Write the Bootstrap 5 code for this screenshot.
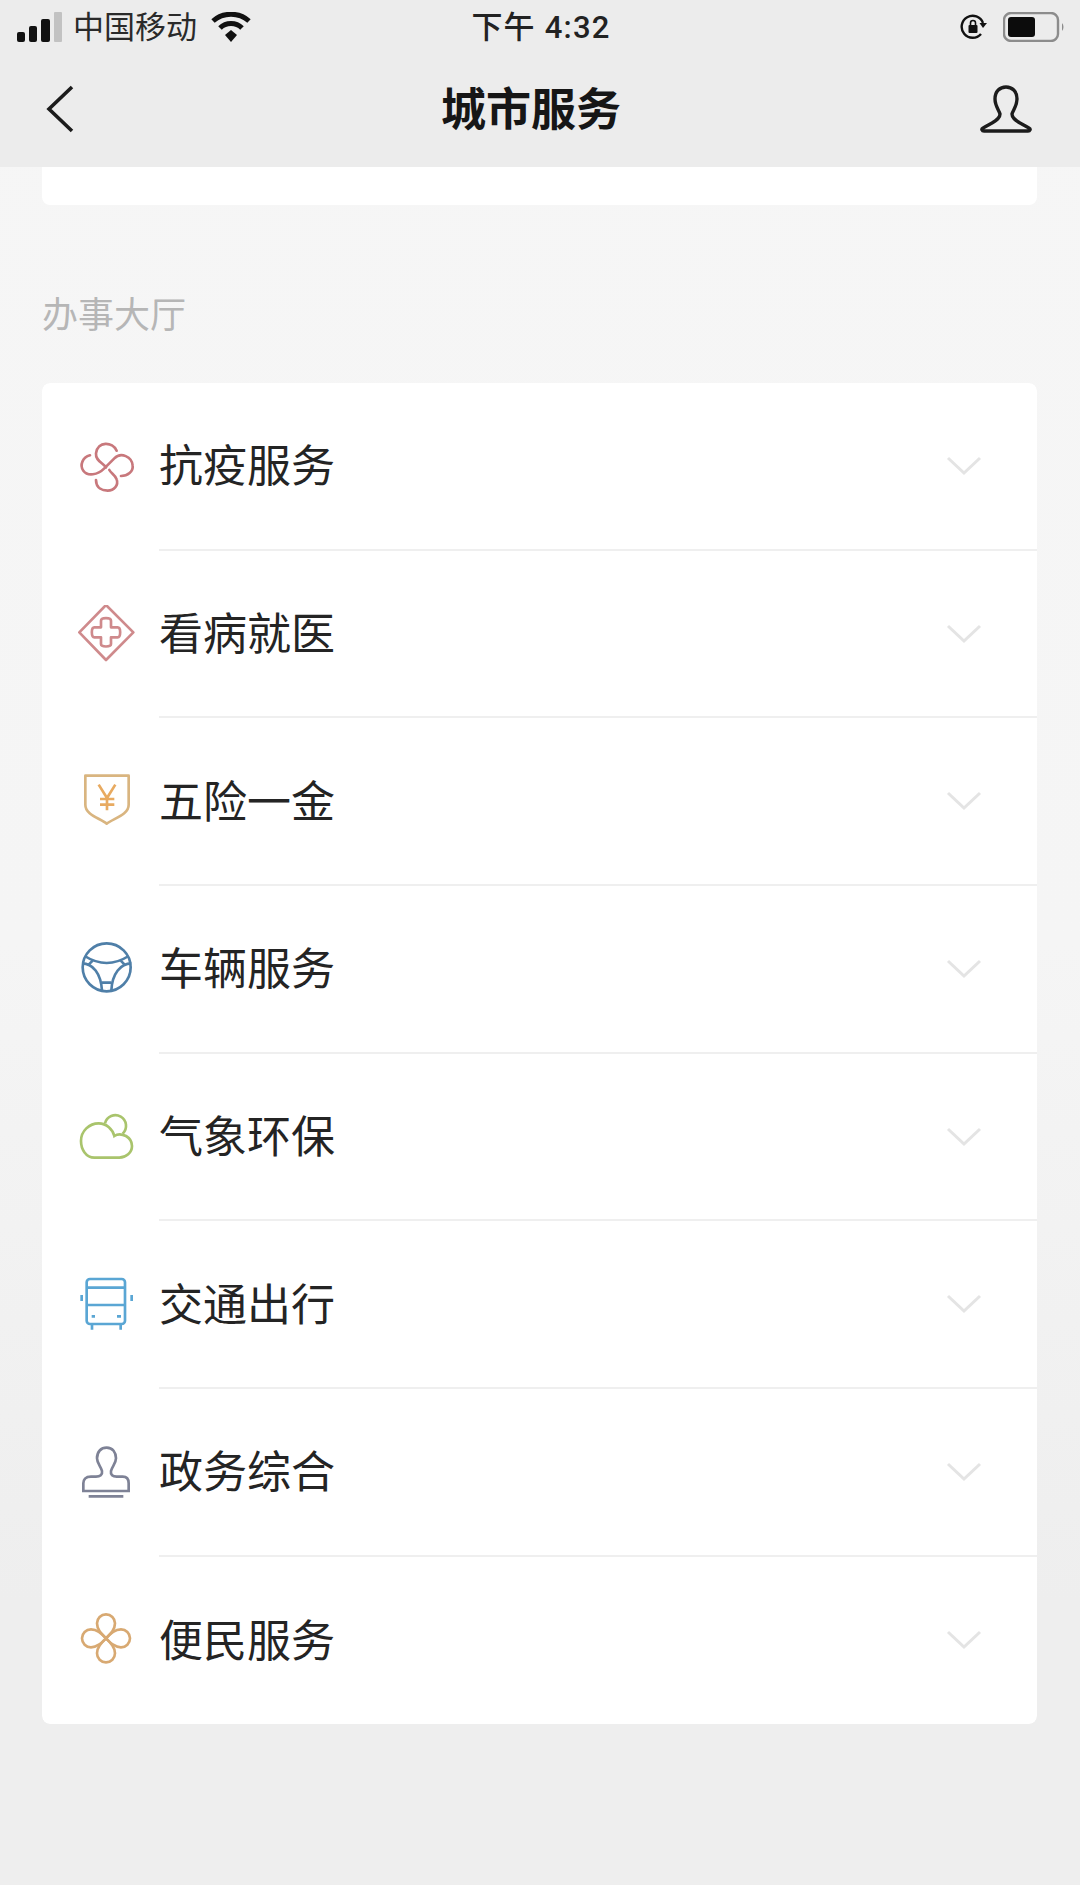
<!DOCTYPE html>
<html lang="zh-CN">
<head>
    <meta charset="UTF-8">
    <meta name="viewport" content="width=device-width, initial-scale=1.0">
    <title>城市服务</title>
    <link href="https://cdn.jsdelivr.net/npm/bootstrap@5.3.3/dist/css/bootstrap.min.css" rel="stylesheet">
    <style>
        body {
            width: 1080px;
            height: 1885px;
            overflow: hidden;
            background: linear-gradient(#f6f6f6, #f5f5f5 50%, #eeeeee 85%, #eeeeee);
            font-family: "Liberation Sans", "Noto Sans CJK SC", sans-serif;
            color: #1e1e1e;
        }
        .top-head { height: 167px; background: #ececec; }
        .status-line { height: 54px; padding: 0 15px 0 17px; }
        .status-side { width: 340px; }
        .carrier { font-size: 31px; line-height: 1; margin-left: 10px; margin-right: 14px; color: #2a2a2a; }
        .clock { font-family: Roboto, "Noto Sans CJK SC", sans-serif; font-weight: 500; font-size: 31px; line-height: 1; letter-spacing: 1.2px; color: #222; }
        .head-line { height: 113px; padding: 0 48px 3px 46px; }
        .head-title { font-size: 45px; font-weight: 700; line-height: 1; color: #161616; margin-left: 6px; padding-top: 3px; }
        .stub-card { height: 38px; margin: 0 43px 0 42px; background: #fff; border-radius: 0 0 8px 8px; }
        .hall-title { font-size: 36px; line-height: 1; color: #b6b6b6; margin: 93px 43px 49px 42px; }
        .hall-list { margin: 0 43px 0 42px; border-radius: 8px; overflow: hidden; border: 0; }
        .hall-row { height: 167.7px; padding: 0 0 0 34px; border: 0; background: #fff; }
        .hall-row:last-child { height: 167px; }
        .hall-body { height: 100%; margin-left: 23px; padding-right: 55px; border-bottom: 2px solid #efefef; }
        .hall-row:last-child .hall-body { border-bottom: 0; }
        .hall-name { font-size: 44px; line-height: 1; padding-top: 3px; color: #242424; }
        .hall-icon { flex-shrink: 0; fill: none; stroke-width: 8; }
    </style>
</head>
<body>
    <header class="top-head">
        <div class="status-line d-flex align-items-center justify-content-between">
            <div class="status-side d-flex align-items-center">
                <svg width="46" height="30" viewBox="0 0 46 30"><rect x="0" y="20" width="8" height="10" rx="2" fill="#111"/><rect x="12" y="14" width="8" height="16" rx="2" fill="#111"/><rect x="24" y="7" width="9" height="23" rx="2" fill="#111"/><rect x="37" y="0" width="8" height="30" rx="1" fill="#c2c2c2"/></svg>
                <span class="carrier">中国移动</span>
                <svg width="40" height="30" viewBox="0 0 40 30"><path d="M2 9C12 0 28 0 38 9" fill="none" stroke="#111" stroke-width="5"/><path d="M9 16C15 10 25 10 31 16" fill="none" stroke="#111" stroke-width="5"/><path d="M14 23L20 18L26 23L20 30Z" fill="#111"/></svg>
            </div>
            <div class="clock">下午 4:32</div>
            <div class="status-side d-flex align-items-center justify-content-end">
                <svg class="me-3" width="27" height="27" viewBox="0 0 27 27"><path d="M21 20A11 11 0 1 1 23 9" fill="none" stroke="#111" stroke-width="2.4"/><path d="M19.5 9H27L23 14Z" fill="#111"/><rect x="8.5" y="11" width="9" height="8" rx="1" fill="#111"/><path d="M10.5 11V9A2.5 2.5 0 0 1 15.5 9V11" fill="none" stroke="#111" stroke-width="1.6"/></svg>
                <svg width="62" height="30" viewBox="0 0 62 30"><rect x="1" y="1" width="54" height="28" rx="7" fill="none" stroke="#8c8c8c" stroke-width="2.4"/><rect x="5" y="5" width="27" height="20" rx="3" fill="#0c0c0c"/><path d="M59 11C61 13 61 17 59 19Z" fill="#8c8c8c"/></svg>
            </div>
        </div>
        <div class="head-line d-flex align-items-center justify-content-between">
            <svg width="30" height="50" viewBox="0 0 30 50"><path d="M26 3L3 25L26 47" fill="none" stroke="#1c1c1c" stroke-width="3.6"/></svg>
            <div class="head-title">城市服务</div>
            <svg width="52" height="48" viewBox="0 0 52 48"><path d="M15 14C15 6 20 2 26 2C32 2 37 6 37 14C37 21 33 25 32 29C32 33 35 35 40 38L49 43C51 44 50 46 48 46H4C2 46 1 44 3 43L12 38C17 35 20 33 20 29C19 25 15 21 15 14Z" fill="none" stroke="#1c1c1c" stroke-width="3.4" stroke-linejoin="round"/></svg>
        </div>
    </header>

    <div class="stub-card"></div>
    <div class="hall-title">办事大厅</div>

    <div class="list-group hall-list">
        <div class="list-group-item hall-row d-flex align-items-center">
            <svg width="60" height="60" viewBox="50 51 180 180" class="hall-icon" stroke="#c8787c" stroke-linecap="round"><path d="M172 92C160 65 115 62 110 100C108 122 130 128 140 142"/><path d="M92 106C70 112 60 135 72 152C85 170 115 165 135 145L165 115C185 95 218 110 220 137C222 155 205 168 185 168"/><path d="M110 180C110 205 130 212 145 212C165 212 178 195 172 178C168 165 155 160 150 150"/></svg>
            <div class="hall-body flex-fill d-flex align-items-center justify-content-between">
                <span class="hall-name">抗疫服务</span>
                <svg width="36" height="20" viewBox="0 0 36 20"><path d="M2 2L18 17L34 2" fill="none" stroke="#e4e4e4" stroke-width="3"/></svg>
            </div>
        </div>
        <div class="list-group-item hall-row d-flex align-items-center">
            <svg width="60" height="60" viewBox="50 45 180 180" class="hall-icon" stroke="#cf8a8c" stroke-linejoin="round"><path d="M140 45L222 127L140 210L60 127Z"/><path d="M125 92C125 82 155 82 155 92V112H175C185 112 185 142 175 142H155V162C155 172 125 172 125 162V142H105C95 142 95 112 105 112H125Z"/></svg>
            <div class="hall-body flex-fill d-flex align-items-center justify-content-between">
                <span class="hall-name">看病就医</span>
                <svg width="36" height="20" viewBox="0 0 36 20"><path d="M2 2L18 17L34 2" fill="none" stroke="#e4e4e4" stroke-width="3"/></svg>
            </div>
        </div>
        <div class="list-group-item hall-row d-flex align-items-center">
            <svg width="60" height="60" viewBox="50 67 180 180" class="hall-icon" stroke-linejoin="round"><path d="M78 78H208V165C208 195 165 205 142 222C120 205 78 195 78 165Z" stroke="#d9b580"/><path d="M118 105L143 145L168 105M143 145V182M122 148H165M122 165H165" stroke="#e8aa60"/></svg>
            <div class="hall-body flex-fill d-flex align-items-center justify-content-between">
                <span class="hall-name">五险一金</span>
                <svg width="36" height="20" viewBox="0 0 36 20"><path d="M2 2L18 17L34 2" fill="none" stroke="#e4e4e4" stroke-width="3"/></svg>
            </div>
        </div>
        <div class="list-group-item hall-row d-flex align-items-center">
            <svg width="60" height="60" viewBox="50 60 180 180" class="hall-icon" stroke="#4f7fa8"><circle cx="142" cy="142" r="72"/><path d="M76 108Q142 150 208 108"/><path d="M68 130C100 130 125 160 128 212"/><path d="M216 130C185 130 158 160 156 212"/><path d="M128 188H156M100 122L88 134M184 122L196 134"/></svg>
            <div class="hall-body flex-fill d-flex align-items-center justify-content-between">
                <span class="hall-name">车辆服务</span>
                <svg width="36" height="20" viewBox="0 0 36 20"><path d="M2 2L18 17L34 2" fill="none" stroke="#e4e4e4" stroke-width="3"/></svg>
            </div>
        </div>
        <div class="list-group-item hall-row d-flex align-items-center">
            <svg width="60" height="60" viewBox="50 51 180 180" class="hall-icon" stroke="#a9c46c"><path d="M105 200C80 200 65 175 65 150C65 120 90 97 118 97C142 97 160 115 165 135C175 128 190 130 200 135C212 142 218 155 218 165C218 185 200 200 180 200Z"/><path d="M137 97A32 32 0 1 1 190 128"/></svg>
            <div class="hall-body flex-fill d-flex align-items-center justify-content-between">
                <span class="hall-name">气象环保</span>
                <svg width="36" height="20" viewBox="0 0 36 20"><path d="M2 2L18 17L34 2" fill="none" stroke="#e4e4e4" stroke-width="3"/></svg>
            </div>
        </div>
        <div class="list-group-item hall-row d-flex align-items-center">
            <svg width="60" height="60" viewBox="50 60 180 180" class="hall-icon" stroke="#5aa6d4"><rect x="82" y="72" width="115" height="135" rx="10"/><path d="M82 98H197M82 150H197"/><path d="M98 210V224M184 210V224M67 120V138M217 120V138M97 184H107M173 184H185"/></svg>
            <div class="hall-body flex-fill d-flex align-items-center justify-content-between">
                <span class="hall-name">交通出行</span>
                <svg width="36" height="20" viewBox="0 0 36 20"><path d="M2 2L18 17L34 2" fill="none" stroke="#e4e4e4" stroke-width="3"/></svg>
            </div>
        </div>
        <div class="list-group-item hall-row d-flex align-items-center">
            <svg width="60" height="60" viewBox="50 54 180 180" class="hall-icon" stroke="#7e8296"><path d="M113 100C113 80 125 68 142 68C160 68 170 82 170 100C170 115 158 125 155 138C153 150 160 155 172 155H190C205 155 208 165 208 175V198H72V175C72 165 78 155 95 155H110C122 155 130 150 128 138C125 125 113 115 113 100Z"/><path d="M88 214H192"/></svg>
            <div class="hall-body flex-fill d-flex align-items-center justify-content-between">
                <span class="hall-name">政务综合</span>
                <svg width="36" height="20" viewBox="0 0 36 20"><path d="M2 2L18 17L34 2" fill="none" stroke="#e4e4e4" stroke-width="3"/></svg>
            </div>
        </div>
        <div class="list-group-item hall-row d-flex align-items-center">
            <svg width="60" height="60" viewBox="50 60 180 180" class="hall-icon" stroke="#d8a972"><path id="petal" d="M140 145C125 130 113 118 113 100A27 27 0 0 1 167 100C167 118 155 130 140 145Z"/><use href="#petal" transform="rotate(90 140 145)"/><use href="#petal" transform="rotate(180 140 145)"/><use href="#petal" transform="rotate(270 140 145)"/></svg>
            <div class="hall-body flex-fill d-flex align-items-center justify-content-between">
                <span class="hall-name">便民服务</span>
                <svg width="36" height="20" viewBox="0 0 36 20"><path d="M2 2L18 17L34 2" fill="none" stroke="#e4e4e4" stroke-width="3"/></svg>
            </div>
        </div>
    </div>

    <script src="https://cdn.jsdelivr.net/npm/bootstrap@5.3.3/dist/js/bootstrap.bundle.min.js"></script>
</body>
</html>
